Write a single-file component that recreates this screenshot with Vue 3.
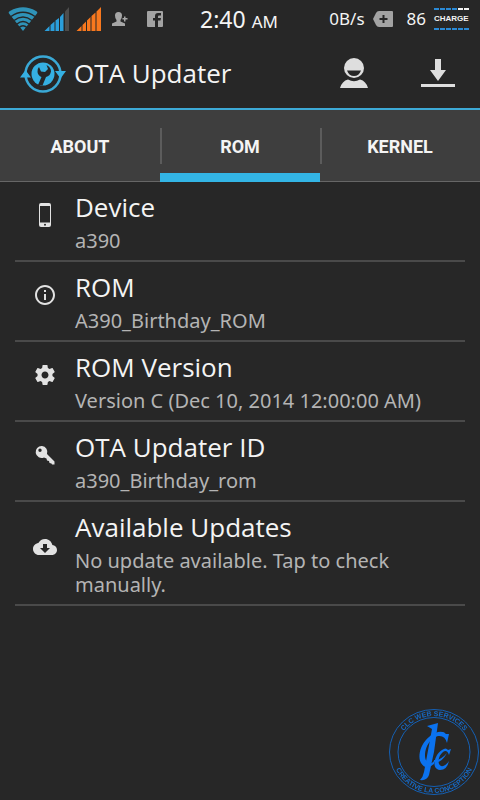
<template>
  <div class="screen">
    <div class="status-bar">
      <div class="status-left">
        <svg class="wifi" viewBox="0 0 30 24" fill="#2f93b8">
          <path d="M15 24 1 6.500Q0 5 2 4Q15-3.500 28 4Q30 5 29 6.500Z"/>
          <g fill="none" stroke="#262626" stroke-width="1.500">
            <path d="M3 9.500Q15 1 27 9.500"/>
            <path d="M6 13.500Q15 6.500 24 13.500"/>
            <path d="M9 17Q15 12 21 17"/>
            <path d="M11 20.500Q15 17 19 20.500"/>
          </g>
        </svg>
        <svg class="signal" viewBox="0 0 25 24">
          <path fill="#2b9fdc" d="M0 24 5 19V24ZM6 18 10 14.500V24H6ZM11 13.500 14.500 11V24H11ZM15.500 10 19 6V24H15.500Z"/>
          <path fill="#4d4d4d" d="M20.500 4.500 24.500 0V24H20.500Z"/>
        </svg>
        <svg class="signal" viewBox="0 0 25 24">
          <path fill="#f8781e" d="M0 24 5 19V24ZM6 18 9.500 14.500V24H6ZM10.500 13.500 14 10V24H10.500ZM15 9 19 5.500V24H15ZM20 4.500 24.500 0V24H20Z"/>
        </svg>
        <svg class="note person" viewBox="0 0 16 16" fill="#a6a6a6">
          <path d="M3 4.500Q3 1 6.500 1T10 4.500Q10 7.500 8.500 9V10.500L13 12.500V15H0V12.500L4.500 10.500V9Q3 7.500 3 4.500ZM12 5.500H13.500V7H15.500V8.500H13.500V10.500H12V8.500H10.500V7H12Z"/>
        </svg>
        <svg class="note" viewBox="0 0 16 16">
          <path fill="#a3a3a3" d="M1 0H15Q16 0 16 1V15Q16 16 15 16H1Q0 16 0 15V1Q0 0 1 0Z"/>
          <path fill="#262626" d="M8 16V9.500H6V7H8V5Q8 2 11 2H14V4.500H12Q11 4.500 11 5.500V7H14L13.500 9.500H11V16Z"/>
        </svg>
      </div>
      <div class="clock">2:40 <span class="ampm">AM</span></div>
      <div class="status-right">
        <span class="rate">0B/s</span>
        <svg class="plus" viewBox="0 0 20 16">
          <path fill="#a3a3a3" d="M6 0H19Q20 0 20 1V15Q20 16 19 16H6Q4 16 3 14L0 8 3 2Q4 0 6 0Z"/>
          <path stroke="#262626" stroke-width="2" d="M6.500 8H14.500M10.500 4V12"/>
        </svg>
        <span class="level">86</span>
        <div class="charge">
          <i class="dashes top"></i>
          <span>CHARGE</span>
          <i class="dashes"></i>
        </div>
      </div>
    </div>

    <header class="app-bar">
      <svg class="logo" viewBox="0 0 46 40">
        <circle cx="23" cy="21" r="17.500" fill="none" stroke="#3aa9d6" stroke-width="2.500"/>
        <circle cx="23" cy="21" r="11.500" fill="#35b0e2"/>
        <path fill="#35b0e2" d="M0 24.500 5.500 17 11 24.500ZM35 18H46L40.500 25.500Z"/>
        <path fill="#262626" d="M18 32 21.500 24Q18 22.500 17.500 19Q17 16 19 14L21 18.500 25 19 28 16 26.500 12Q31 14 31 18.500Q30 23 26 24L22.500 32.500Z"/>
      </svg>
      <h1>OTA Updater</h1>
      <button class="action" aria-label="Account">
        <svg viewBox="0 0 28 30" fill="#dedede">
          <circle cx="14" cy="10" r="10"/>
          <path fill="#262626" d="M7 12.500H21Q19 18 14 18T7 12.500Z"/>
          <path d="M0 30Q2 23 8 21.500Q14 25 20 21.500Q26 23 28 30Z"/>
        </svg>
      </button>
      <button class="action download" aria-label="Download">
        <svg viewBox="0 0 34 30" fill="#dedede">
          <path d="M14 1H20V12H25L17 23 9 12H14ZM0 26H34V29H0Z"/>
        </svg>
      </button>
    </header>

    <nav class="tabs">
      <button
        v-for="tab in tabs"
        :key="tab"
        :class="['tab', { active: tab === activeTab }]"
        @click="activeTab = tab"
      >
        {{ tab }}
      </button>
    </nav>

    <ul class="list">
      <li v-for="item in items" :key="item.title" class="row">
        <svg class="row-icon" viewBox="0 0 24 24" fill="#e2e2e2">
          <path fill-rule="evenodd" :d="icons[item.icon]"/>
        </svg>
        <div class="row-text">
          <h2>{{ item.title }}</h2>
          <p>{{ item.detail }}</p>
        </div>
      </li>
    </ul>

    <!-- Brand stamp floating over the page corner -->
    <svg class="stamp" viewBox="0 0 92 92">
      <defs>
        <path id="arc-top" d="M9 46A37 36 0 0 1 83 46"/>
        <path id="arc-bottom" d="M4 46A42 41 0 0 0 88 46"/>
      </defs>
      <g fill="none" stroke="#1560b4">
        <ellipse cx="46" cy="46" rx="44.500" ry="42.500"/>
        <ellipse cx="46" cy="46" rx="36" ry="34.500"/>
      </g>
      <g class="stamp-text">
        <text><textPath href="#arc-top" startOffset="50%">CLC WEB SERVICES</textPath></text>
        <text><textPath href="#arc-bottom" startOffset="50%">CREATIVE LA CONCEPTION</textPath></text>
      </g>
      <g fill="#0b72ee">
        <path d="M39 20 50 17 46 46 41 69Q39 75 32 74Q35 71 36 66L44 23Z"/>
        <path d="M61 28 59 37Q57 29 50 30C39 33 34 49 39 56Q42 60 47 54L46 58Q38 65 33 57C28 47 36 30 50 26Q56 25 58 28Z"/>
        <path d="M63 43 61 49Q59 43 55 46C50 50 49 58 53 60Q57 61 61 55Q59 64 52 64C43 63 46 49 54 44Q58 41 60 44Z"/>
        <path d="M46 54Q52 55 59 47Q53 58 46 56Z"/>
      </g>
    </svg>
  </div>
</template>

<script setup>
import { ref } from 'vue';

const tabs = ['ABOUT', 'ROM', 'KERNEL'];
const activeTab = ref('ROM');

const items = [
  { icon: 'phone', title: 'Device', detail: 'a390' },
  { icon: 'info', title: 'ROM', detail: 'A390_Birthday_ROM' },
  { icon: 'gear', title: 'ROM Version', detail: 'Version C (Dec 10, 2014 12:00:00 AM)' },
  { icon: 'key', title: 'OTA Updater ID', detail: 'a390_Birthday_rom' },
  { icon: 'cloud', title: 'Available Updates', detail: 'No update available. Tap to check manually.' },
];

const icons = {
  phone: 'M8 0H16Q18 0 18 2V22Q18 24 16 24H8Q6 24 6 22V2Q6 0 8 0ZM7 3V19.500H17V3ZM12 20.700A1 1 0 1 0 12 22.700A1 1 0 1 0 12 20.700Z',
  info: 'M11 17h2v-6h-2v6zm1-15C6.480 2 2 6.480 2 12s4.480 10 10 10 10-4.480 10-10S17.520 2 12 2zm0 18c-4.410 0-8-3.590-8-8s3.590-8 8-8 8 3.590 8 8-3.590 8-8 8zM11 9h2V7h-2v2z',
  gear: 'M19.430 12.980c.04-.32.07-.64.07-.98s-.03-.66-.07-.98l2.110-1.650c.19-.15.24-.42.12-.64l-2-3.460c-.12-.22-.39-.3-.61-.22l-2.490 1c-.52-.4-1.080-.73-1.690-.98l-.38-2.650C14.460 2.180 14.250 2 14 2h-4c-.25 0-.46.18-.49.42l-.38 2.650c-.61.25-1.170.59-1.690.98l-2.490-1c-.23-.09-.49 0-.61.22l-2 3.460c-.13.22-.07.49.12.64l2.110 1.650c-.04.32-.07.65-.07.98s.03.66.07.98l-2.110 1.650c-.19.15-.24.42-.12.64l2 3.460c.12.22.39.3.61.22l2.490-1c.52.4 1.080.73 1.690.98l.38 2.650c.03.24.24.42.49.42h4c.25 0 .46-.18.49-.42l.38-2.650c.61-.25 1.170-.59 1.690-.98l2.490 1c.23.09.49 0 .61-.22l2-3.460c.12-.22.07-.49-.12-.64l-2.110-1.650zM12 15.500c-1.930 0-3.500-1.570-3.500-3.500s1.570-3.500 3.500-3.500 3.500 1.570 3.500 3.500-1.570 3.500-3.500 3.500z',
  key: 'M9 3A6 6 0 1 0 11 14.500L13.500 15.500 14 17.500 16 18 16.500 20 18.500 20.500 19 21.500H21.500V18.500L14 11A6 6 0 0 0 9 3ZM7 5.500A1.700 1.700 0 1 1 7 8.900A1.700 1.700 0 1 1 7 5.500Z',
  cloud: 'M19.350 10.040C18.670 6.590 15.640 4 12 4 9.110 4 6.600 5.640 5.350 8.040 2.340 8.360 0 10.910 0 14c0 3.310 2.690 6 6 6h13c2.760 0 5-2.240 5-5 0-2.640-2.050-4.780-4.650-4.960zM10 9h4v4h3l-5 5-5-5h3V9z',
};
</script>

<style>
body {
  margin: 0;
  background: #272727;
}
</style>

<style scoped>
.screen {
  min-height: 100vh;
  background: #272727;
  color: #f4f4f4;
  font-family: "Noto Sans", "Open Sans", sans-serif;
}

.status-bar {
  display: grid;
  grid-template-columns: 1fr auto 1fr;
  grid-template-rows: 38px;
  align-items: center;
  padding: 0 10px 0 8px;
}

.status-left,
.status-right {
  display: flex;
  align-items: center;
}

.status-left {
  gap: 6px;
}

.status-right {
  justify-content: flex-end;
  gap: 8px;
}

.wifi {
  width: 30px;
  height: 24px;
}

.signal {
  width: 26px;
  height: 24px;
}

.note {
  width: 16px;
  height: 16px;
}

.person {
  margin: 0 13px 0 4px;
}

.clock {
  font-size: 23px;
  line-height: 38px;
}

.ampm {
  font-size: 17px;
  line-height: 24px;
}

.rate,
.level {
  font-size: 17px;
  line-height: 38px;
}

.plus {
  width: 20px;
  height: 16px;
  margin-right: 6px;
}

.charge {
  display: flex;
  flex-direction: column;
  width: 36px;
  font: bold 8px/12px "Liberation Sans", sans-serif;
  gap: 3px;
}

.dashes {
  height: 2px;
  background: repeating-linear-gradient(90deg, #2b8ad6 0 5px, #272727 5px 6px);
}

.dashes.top {
  background: repeating-linear-gradient(90deg, transparent 0 5px, #272727 5px 6px), linear-gradient(90deg, #2b8ad6 66%, #f4f4f4 66%);
}

.app-bar {
  display: flex;
  align-items: center;
  height: 70px;
  padding: 0 10px 0 20px;
  border-bottom: 2px solid #3daad6;
}

.logo {
  width: 46px;
  height: 40px;
  margin-right: 8px;
}

h1,
h2 {
  font-family: "Open Sans", "Noto Sans", sans-serif;
  font-size: 26px;
  font-weight: 400;
  line-height: 36px;
}

h1 {
  flex: 1;
  margin: 0;
}

.action {
  display: flex;
  justify-content: center;
  width: 64px;
  padding: 0;
  border: 0;
  background: none;
}

.download {
  margin-left: 20px;
}

.action svg {
  height: 30px;
}

.tabs {
  display: flex;
  height: 71px;
  background: #3e3e3e;
  border-bottom: 1px solid #666;
}

.tab {
  position: relative;
  flex: 1;
  padding: 2px 0 0;
  border: 0;
  background: none;
  color: #f4f4f4;
  font: bold 18px/24px Roboto, sans-serif;
}

.tab + .tab::before {
  content: "";
  position: absolute;
  top: 18px;
  left: 0;
  width: 2px;
  height: 36px;
  background: #5c5c5c;
}

.tab.active::after {
  content: "";
  position: absolute;
  right: 0;
  bottom: -1px;
  left: 0;
  height: 9px;
  background: #33b5e5;
}

.list {
  margin: 0;
  padding: 0 15px;
  list-style: none;
}

.row {
  display: flex;
  align-items: center;
  padding: 7px 0;
  border-bottom: 2px solid #4a4a4a;
}

.row-icon {
  flex: none;
  width: 24px;
  height: 24px;
  margin: 0 18px 12px;
}

h2 {
  margin: 0 0 4px;
}

p {
  margin: 0;
  color: #b4b4b4;
  font-size: 20px;
  line-height: 24px;
}

.stamp {
  position: fixed;
  right: 0;
  bottom: 2px;
  width: 92px;
  height: 92px;
}

.stamp-text {
  fill: #1769c4;
  font: bold 7px "Liberation Sans", sans-serif;
  text-anchor: middle;
}
</style>
